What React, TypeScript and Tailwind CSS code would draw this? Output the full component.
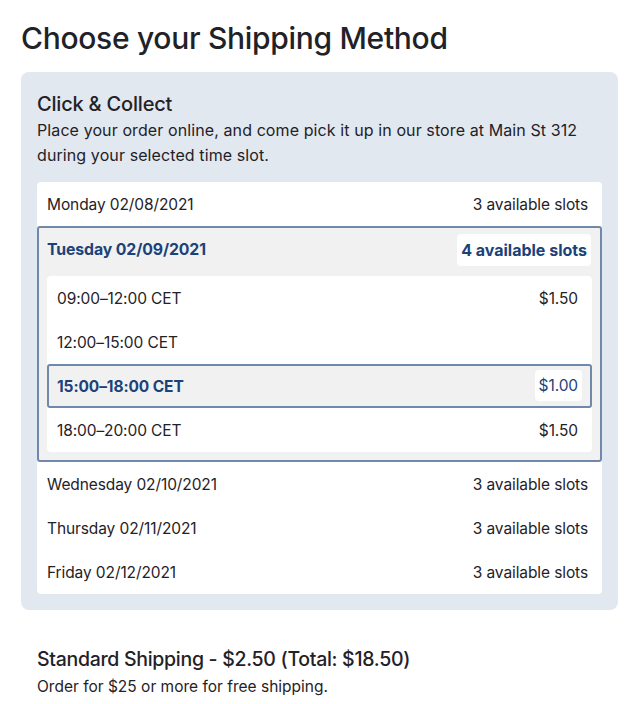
import React from 'react';

type Day = { label: string; slots: number };

const before: Day[] = [{ label: 'Monday 02/08/2021', slots: 3 }];
const after: Day[] = [
  { label: 'Wednesday 02/10/2021', slots: 3 },
  { label: 'Thursday 02/11/2021', slots: 3 },
  { label: 'Friday 02/12/2021', slots: 3 },
];

const times = [
  { label: '09:00–12:00 CET', price: '$1.50' },
  { label: '12:00–15:00 CET', price: '' },
  { label: '15:00–18:00 CET', price: '$1.00', selected: true },
  { label: '18:00–20:00 CET', price: '$1.50' },
];

function DayRow({ day }: { day: Day }) {
  return (
    <div className="flex items-center justify-between h-[44px] px-[10px] pt-[2px]">
      <span>{day.label}</span>
      <span className="px-[4px]">{day.slots} available slots</span>
    </div>
  );
}

export default function App() {
  return (
    <div
      className="min-h-screen bg-white text-[#1f2227] px-[21px] pt-[20px]"
      style={{ fontFamily: 'Inter, "Liberation Sans", sans-serif' }}
    >
      <h1 className="text-[30px] leading-[36px] font-medium tracking-[-0.3px] mb-[16px]">
        Choose your Shipping Method
      </h1>

      <div className="bg-[#e2e8f0] rounded-lg px-4 pt-[19px] pb-[16px]">
        <h2 className="text-[20px] leading-[27px] font-medium tracking-[-0.2px]">Click &amp; Collect</h2>
        <p className="text-[16px] leading-[25px] tracking-[0.1px] mb-[14px]">
          Place your order online, and come pick it up in our store at Main St 312 during your selected time slot.
        </p>

        <div className="bg-white rounded text-[15.5px] tracking-[-0.1px]">
          {before.map((d) => (
            <DayRow key={d.label} day={d} />
          ))}

          <div className="border-2 border-[#7088ab] rounded-[3px] bg-[#f1f1f1] px-[8px] pt-[6px] pb-[8px]">
            <div className="flex items-center justify-between h-[32px] mb-[10px] pr-[1px]">
              <span className="font-bold text-[#1c427a] text-[15.8px]">Tuesday 02/09/2021</span>
              <span className="bg-white rounded h-[32px] flex items-center px-[4px] font-bold text-[#1c427a] text-[16px] tracking-[0px]">
                4 available slots
              </span>
            </div>
            <div className="bg-white rounded">
              {times.map((t) =>
                t.selected ? (
                  <div
                    key={t.label}
                    className="flex items-center justify-between h-[44px] px-[8px] pt-[2px] border-2 border-[#7088ab] rounded-[3px] bg-[#f1f1f1]"
                  >
                    <span className="font-bold text-[#1c427a]">{t.label}</span>
                    <span className="bg-white rounded px-[4px] h-[31px] flex items-center text-[#1c427a] -mt-[3px]">
                      {t.price}
                    </span>
                  </div>
                ) : (
                  <div key={t.label} className="flex items-center justify-between h-[44px] px-[10px] pt-[2px]">
                    <span>{t.label}</span>
                    <span className="px-[4px]">{t.price}</span>
                  </div>
                )
              )}
            </div>
          </div>

          {after.map((d) => (
            <DayRow key={d.label} day={d} />
          ))}
        </div>
      </div>

      <div className="px-4 mt-[35px]">
        <h2 className="text-[19.5px] leading-[28px] font-medium tracking-[-0.3px]">
          Standard Shipping - $2.50 (Total: $18.50)
        </h2>
        <p className="text-[15.5px] leading-[24px] mt-[2px]">Order for $25 or more for free shipping.</p>
      </div>
    </div>
  );
}
